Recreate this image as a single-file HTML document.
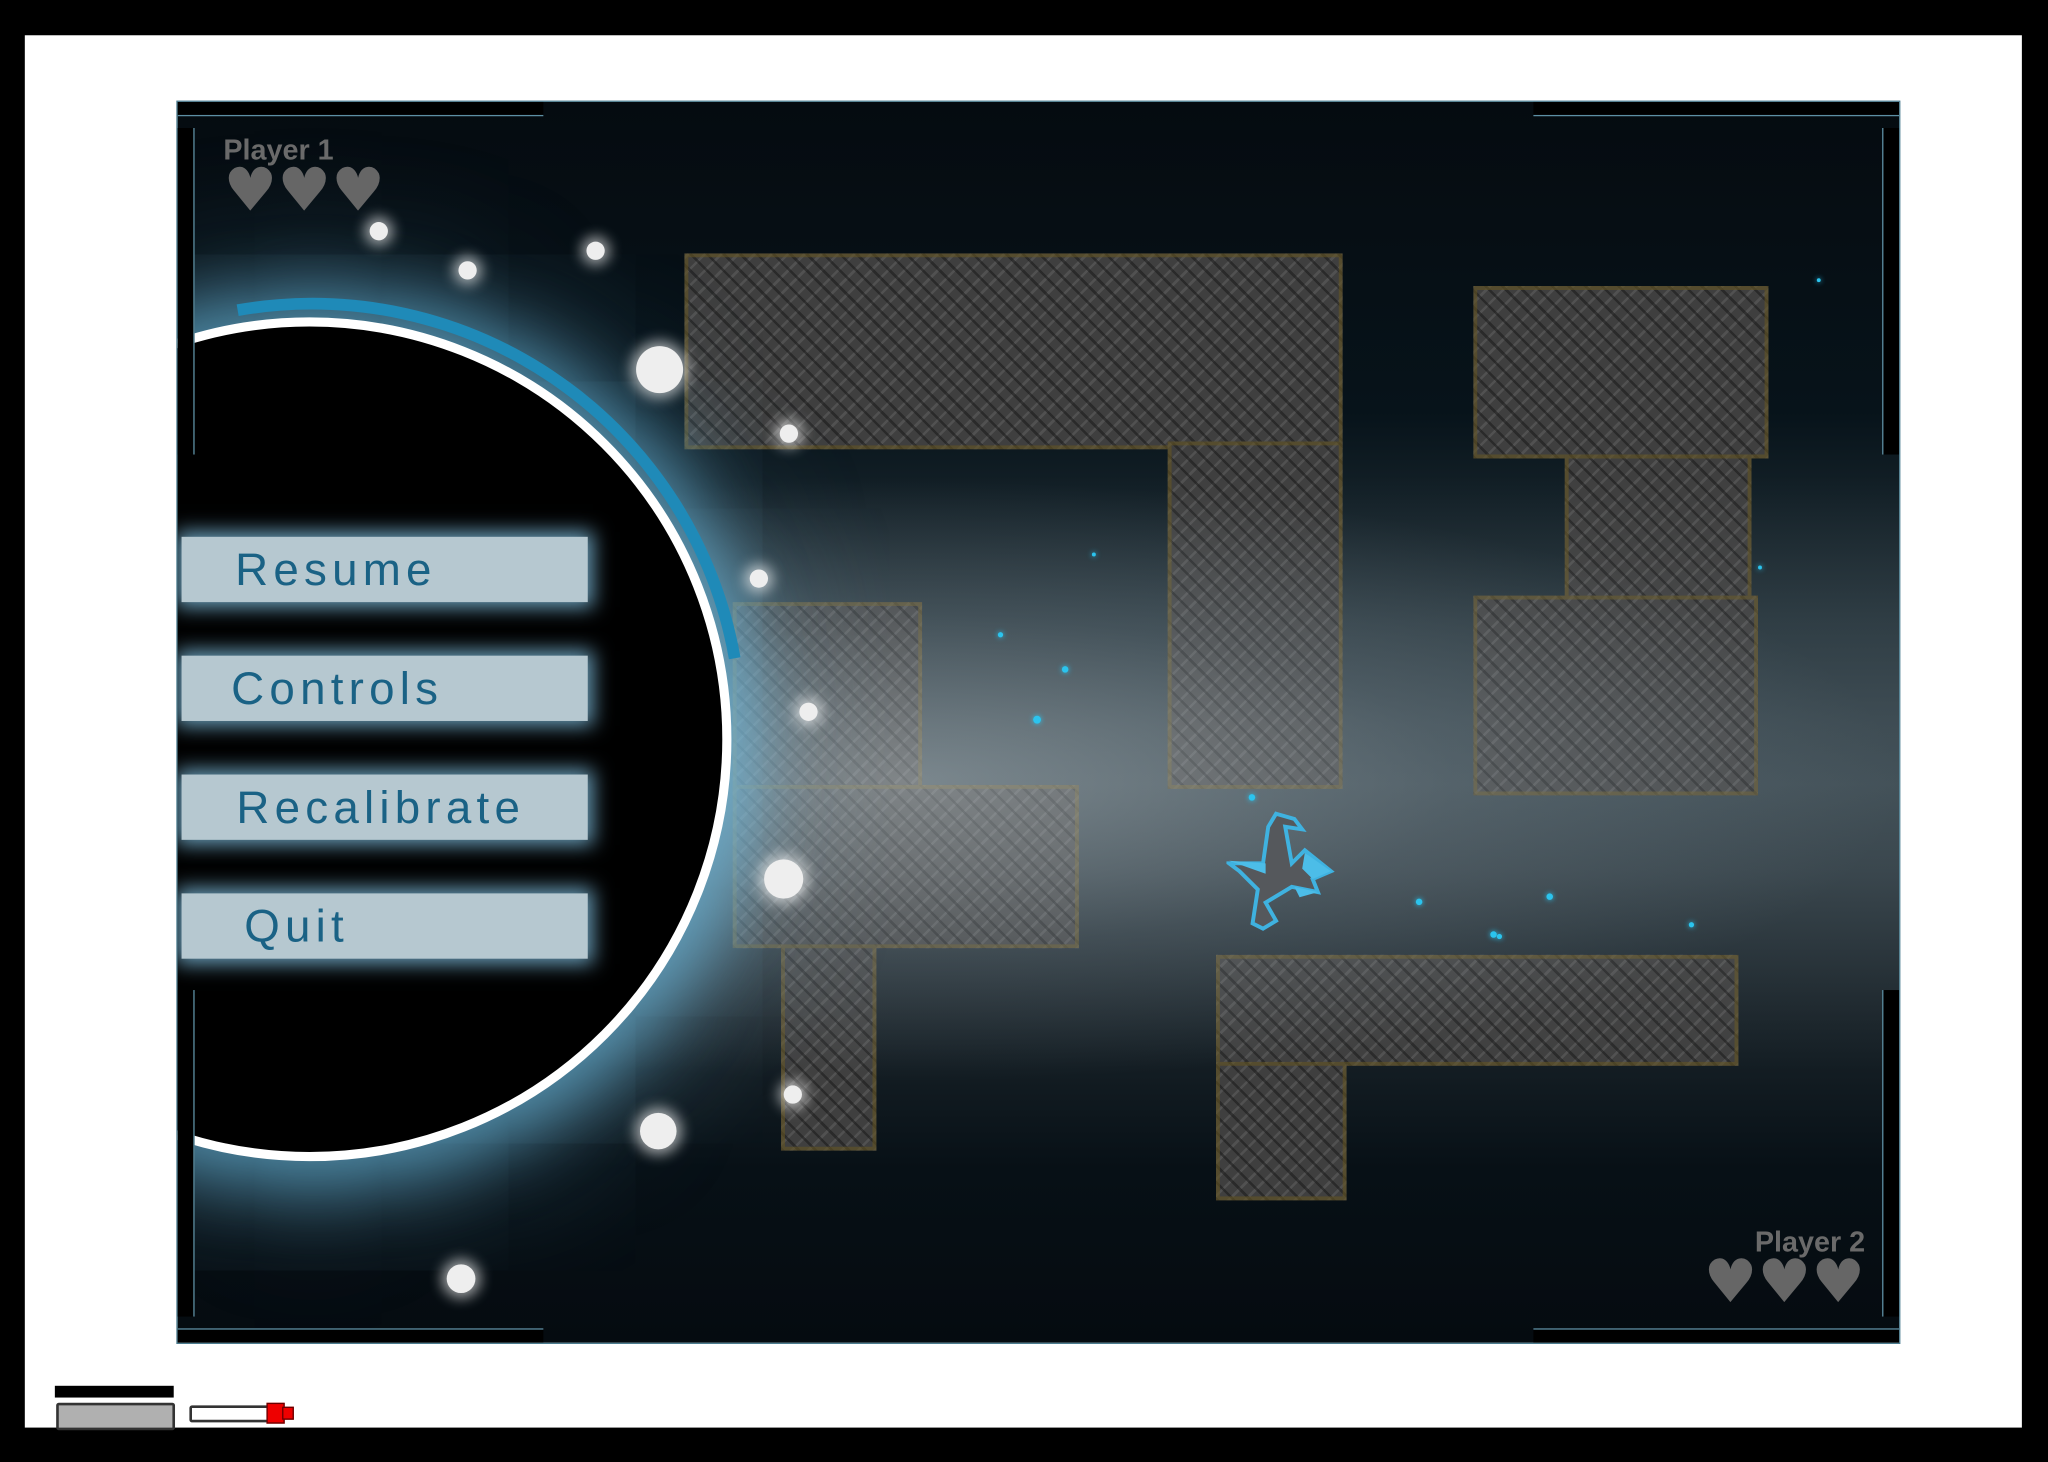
<!DOCTYPE html>
<html><head><meta charset="utf-8"><style>
html,body{margin:0;padding:0;background:#000;width:2048px;height:1462px;overflow:hidden}
#s{position:absolute;left:0;top:0;width:1568px;height:1119px;transform:scale(1.30612);transform-origin:0 0}
.white{position:absolute;left:19px;top:27px;width:1529px;height:1066px;background:#fff}
#g{position:absolute;left:135px;top:77px;width:1318px;height:950px;overflow:hidden;
background:linear-gradient(180deg,#050b10 0%,#07131a 25%,#26343b 42%,#35434a 55%,#1c262c 72%,#071016 86%,#050b10 100%);
border:1px solid #4b7d90}
.ov{position:absolute;left:0;top:0;width:100%;height:100%;pointer-events:none;
background:radial-gradient(ellipse 760px 230px at 560px 520px, rgba(200,210,215,.42), rgba(160,175,185,.18) 55%, rgba(0,0,0,0) 100%),
linear-gradient(180deg,rgba(0,0,0,0) 30%,rgba(170,185,195,.12) 50%,rgba(170,185,195,.12) 62%,rgba(0,0,0,0) 78%)}
.m{position:absolute;background-color:#3f3f3f;
background-image:repeating-linear-gradient(45deg,rgba(20,20,20,.5) 0 2px,rgba(0,0,0,0) 2px 9px),repeating-linear-gradient(-45deg,rgba(200,200,200,.13) 0 2px,rgba(0,0,0,0) 2px 9px);
box-shadow:inset 0 0 0 3px rgba(100,85,35,.6)}
.dot{position:absolute;border-radius:50%;background:#eee;box-shadow:0 0 10px 4px rgba(255,255,255,.6)}
.st{position:absolute;border-radius:50%;background:#2bc4ee;box-shadow:0 0 4px #2bc4ee}
.btn{position:absolute;left:3px;width:311px;height:50px;background:#b6c8d0;box-shadow:0 0 14px 4px rgba(140,210,245,.75);
font-family:"Liberation Sans",sans-serif;color:#1a6285;font-size:35px;letter-spacing:4px;line-height:52px;box-sizing:border-box}
.p{position:absolute;font-family:"Liberation Sans",sans-serif;font-weight:bold;color:#6a6a6a;font-size:22px}
.h{font-size:46px;color:#666;letter-spacing:0px;line-height:34px;font-family:"DejaVu Sans",sans-serif}
</style></head><body><div id="s">
<div class="white"></div>
<div id="g">
 <div class="m" style="left:388px;top:116px;width:504px;height:150px"></div>
 <div class="m" style="left:758px;top:260px;width:134px;height:266px"></div>
 <div class="m" style="left:992px;top:141px;width:226px;height:132px"></div>
 <div class="m" style="left:1062px;top:270px;width:143px;height:112px"></div>
 <div class="m" style="left:992px;top:378px;width:218px;height:153px"></div>
 <div class="m" style="left:425px;top:383px;width:145px;height:145px"></div>
 <div class="m" style="left:425px;top:523px;width:265px;height:125px"></div>
 <div class="m" style="left:462px;top:645px;width:73px;height:158px"></div>
 <div class="m" style="left:795px;top:653px;width:400px;height:85px"></div>
 <div class="m" style="left:795px;top:735px;width:100px;height:106px"></div>
 <div class="ov"></div>
 <div class="st" style="left:655px;top:470px;width:6px;height:6px"></div>
 <div class="st" style="left:677px;top:432px;width:5px;height:5px"></div>
 <div class="st" style="left:628px;top:406px;width:4px;height:4px"></div>
 <div class="st" style="left:820px;top:530px;width:5px;height:5px"></div>
 <div class="st" style="left:948px;top:610px;width:5px;height:5px"></div>
 <div class="st" style="left:1048px;top:606px;width:5px;height:5px"></div>
 <div class="st" style="left:1005px;top:635px;width:5px;height:5px"></div>
 <div class="st" style="left:1010px;top:637px;width:4px;height:4px"></div>
 <div class="st" style="left:1157px;top:628px;width:4px;height:4px"></div>
 <div class="st" style="left:1255px;top:135px;width:3px;height:3px"></div>
 <div class="st" style="left:1210px;top:355px;width:3px;height:3px"></div>
 <div class="st" style="left:700px;top:345px;width:3px;height:3px"></div>
 <svg style="position:absolute;left:803px;top:543px" width="86" height="94" viewBox="0 0 86 94">
  <path d="M38 2 L52 6 L58 14 L45 12 L50 40 L60 30 L80 46 L66 52 L70 62 L50 58 L30 70 L38 84 L28 90 L20 86 L24 60 L10 46 L2 40 L28 40 L32 12 Z" fill="#55585c" stroke="#3fb2e0" stroke-width="3"/>
  <path d="M2 38 L30 40 L30 48 Z M60 32 L80 46 L66 52 L58 44 Z M52 58 L70 62 L56 66 Z" fill="#4cbde8"/>
 </svg>
 <div style="position:absolute;left:-215px;top:170px;width:636px;height:636px;border-radius:50%;box-shadow:0 0 50px 25px rgba(110,195,235,.6),0 0 120px 50px rgba(120,180,210,.28)"></div>
 <div style="position:absolute;left:-230px;top:150px;width:666px;height:666px;border-radius:50%;border:9px solid transparent;border-top-color:#1f8ab8;transform:rotate(35deg);box-sizing:border-box"></div>
 <div style="position:absolute;left:-222px;top:165px;width:646px;height:646px;border-radius:50%;background:#000;border:7px solid #fff;box-sizing:border-box"></div>
 <div class="dot" style="left:147px;top:92px;width:14px;height:14px"></div>
 <div class="dot" style="left:215px;top:122px;width:14px;height:14px"></div>
 <div class="dot" style="left:313px;top:107px;width:14px;height:14px"></div>
 <div class="dot" style="left:351px;top:187px;width:36px;height:36px"></div>
 <div class="dot" style="left:461px;top:247px;width:14px;height:14px"></div>
 <div class="dot" style="left:438px;top:358px;width:14px;height:14px"></div>
 <div class="dot" style="left:476px;top:460px;width:14px;height:14px"></div>
 <div class="dot" style="left:449px;top:580px;width:30px;height:30px"></div>
 <div class="dot" style="left:464px;top:753px;width:14px;height:14px"></div>
 <div class="dot" style="left:354px;top:774px;width:28px;height:28px"></div>
 <div class="dot" style="left:206px;top:890px;width:22px;height:22px"></div>
 <div class="btn" style="top:333px;padding-left:41px">Resume</div>
 <div class="btn" style="top:424px;padding-left:38px">Controls</div>
 <div class="btn" style="top:515px;padding-left:42px">Recalibrate</div>
 <div class="btn" style="top:606px;padding-left:48px">Quit</div>
 <div style="position:absolute;left:0;top:0;width:280px;height:10px;background:#000;border-bottom:1px solid #5d8fa3"></div>
 <div style="position:absolute;right:0;top:0;width:280px;height:10px;background:#000;border-bottom:1px solid #5d8fa3"></div>
 <div style="position:absolute;left:0;bottom:0;width:280px;height:10px;background:#000;border-top:1px solid #5d8fa3"></div>
 <div style="position:absolute;right:0;bottom:0;width:280px;height:10px;background:#000;border-top:1px solid #5d8fa3"></div>
 <div style="position:absolute;left:0;top:20px;width:12px;height:250px;background:#000;border-right:1px solid #5d8fa3"></div>
 <div style="position:absolute;right:0;top:20px;width:12px;height:250px;background:#000;border-left:1px solid #5d8fa3"></div>
 <div style="position:absolute;left:0;bottom:20px;width:12px;height:250px;background:#000;border-right:1px solid #5d8fa3"></div>
 <div style="position:absolute;right:0;bottom:20px;width:12px;height:250px;background:#000;border-left:1px solid #5d8fa3"></div>
 <div class="p" style="left:35px;top:24px">Player 1<div class="h">♥♥♥</div></div>
 <div class="p" style="right:26px;top:860px;text-align:right">Player 2<div class="h">♥♥♥</div></div>
</div>
<div style="position:absolute;left:42px;top:1061px;width:91px;height:9px;background:#000"></div>
<div style="position:absolute;left:43px;top:1074px;width:87px;height:17px;background:#b0b0b0;border:2px solid #333;border-radius:2px"></div>
<div style="position:absolute;left:145px;top:1076px;width:58px;height:9px;background:#fff;border:2px solid #333;border-radius:2px"></div>
<div style="position:absolute;left:204px;top:1074px;width:12px;height:14px;background:#e00;border:1px solid #600"></div>
<div style="position:absolute;left:216px;top:1077px;width:7px;height:8px;background:#e00;border:1px solid #600"></div>
</div></body></html>
